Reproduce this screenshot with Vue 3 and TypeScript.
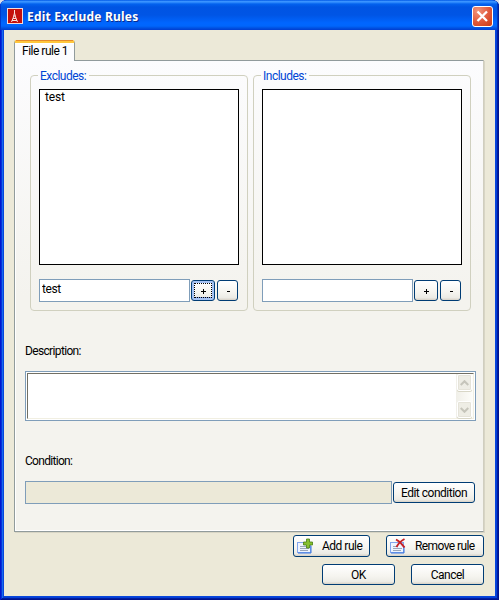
<script setup lang="ts">
import { ref } from 'vue'

interface Group {
  title: string
  items: string[]
  entry: string
  focused: boolean
}

const groups = ref<Group[]>([
  { title: 'Excludes:', items: ['test'], entry: 'test', focused: true },
  { title: 'Includes:', items: [], entry: '', focused: false },
])

function add(g: Group) {
  if (g.entry) g.items.push(g.entry)
}

function removeLast(g: Group) {
  g.items.pop()
}
</script>

<template>
  <div class="window">
    <header class="titlebar">
      <svg class="app-icon" width="16" height="16" viewBox="0 0 16 16">
        <rect width="16" height="16" fill="#f4dcd8" />
        <rect x="1" y="1" width="14" height="14" fill="#c4110c" />
        <path d="M7.500 2v3M7.500 5L6.500 9L4.500 14M7.500 5L8.500 9L10.500 14M6.500 8h2M6 10.500h3M5 12.500h5" stroke="#f8e0dc" fill="none" />
      </svg>
      <h1 class="title"><span>Edit Exclude Rules</span></h1>
      <button class="close" aria-label="Close">
        <svg width="21" height="21" viewBox="0 0 21 21">
          <path d="M5.500 5.500L15 15M15 5.500L5.500 15" stroke="#fff" stroke-width="2.300" />
        </svg>
      </button>
    </header>

    <main class="client">
      <div class="tab"><span>File rule 1</span></div>
      <section class="page">
        <div class="groups">
          <fieldset v-for="g in groups" :key="g.title" class="group">
            <legend>{{ g.title }}</legend>
            <ul class="list">
              <li v-for="(item, i) in g.items" :key="i">{{ item }}</li>
            </ul>
            <div class="entry-row">
              <input v-model="g.entry" class="entry" type="text" />
              <button class="btn plus" :class="{ focused: g.focused }" @click="add(g)">
                <svg width="7" height="7" viewBox="0 0 7 7" shape-rendering="crispEdges"><path d="M1 3.500h5M3.500 1v5" stroke="#000" /></svg>
              </button>
              <button class="btn minus" @click="removeLast(g)">
                <svg width="7" height="7" viewBox="0 0 7 7" shape-rendering="crispEdges"><path d="M2 3.500h3" stroke="#000" /></svg>
              </button>
            </div>
          </fieldset>
        </div>

        <p class="label description-label">Description:</p>
        <div class="memo">
          <div class="memo-inner">
            <div class="memo-text"></div>
            <div class="scroll">
              <span class="arrow"><svg width="9" height="6" viewBox="0 0 9 6"><path d="M.7 5L4.500 1.300L8.300 5" /></svg></span>
              <span class="arrow"><svg width="9" height="6" viewBox="0 0 9 6"><path d="M.7 1L4.500 4.700L8.300 1" /></svg></span>
            </div>
          </div>
        </div>

        <p class="label condition-label">Condition:</p>
        <div class="condition-row">
          <div class="condition"></div>
          <button class="btn edit"><span>Edit condition</span></button>
        </div>
      </section>

      <div class="actions rules">
        <button class="btn add">
          <svg class="rule-icon" width="16" height="16" viewBox="0 0 16 16">
            <rect x=".5" y="4.500" width="13" height="10" fill="#eef4ff" stroke="#82a5ee" />
            <path d="M1 15h13V8" stroke="#3974df" fill="none" />
            <path d="M3 8.500h6M3 10.500h9M3 12.500h8" stroke="#9aa6ba" />
            <path d="M9.500 1h3v3h3v3h-3v3h-3V7h-3V4h3z" fill="#86c030" stroke="#477d14" stroke-width=".8" />
          </svg>
          <span>Add rule</span>
        </button>
        <button class="btn remove">
          <svg class="rule-icon" width="16" height="16" viewBox="0 0 16 16">
            <rect x=".5" y="4.500" width="13" height="10" fill="#eef4ff" stroke="#82a5ee" />
            <path d="M1 15h13V8" stroke="#3974df" fill="none" />
            <path d="M3 8.500h4M3 10.500h9M3 12.500h8" stroke="#9aa6ba" />
            <path d="M6 1.500Q11 4 14.500 9.500M14.500 1Q9 4 6.500 9" stroke="#c52026" stroke-width="1.900" fill="none" />
          </svg>
          <span>Remove rule</span>
        </button>
      </div>
      <div class="actions dialog">
        <button class="btn ok"><span>OK</span></button>
        <button class="btn cancel"><span>Cancel</span></button>
      </div>
    </main>
  </div>
</template>

<style>
body {
  margin: 0;
  background: #d8dfe9;
}
</style>

<style scoped>
.window,
.window * {
  box-sizing: border-box;
}

.window {
  display: flex;
  flex-direction: column;
  width: 499px;
  height: 600px;
  padding: 0 4px 4px;
  overflow: hidden;
  border-radius: 7px 7px 0 0;
  background: #0846dc;
  box-shadow: inset 1px 0 #0019cf, inset -1px 0 #00138c, inset 0 -1px #00138c, inset 2px 0 #0831d9, inset -2px 0 #001ea0, inset 0 -2px #001ea0, inset 3px 0 #166aee, inset -3px 0 #0441d8, inset 0 -3px #0441d8;
  font-family: Roboto, "Liberation Sans", sans-serif;
  font-size: 12px;
  letter-spacing: -.5px;
  line-height: 14px;
  color: #000;
}

.titlebar {
  display: flex;
  flex: none;
  align-items: flex-start;
  height: 30px;
  margin: 0 -4px;
  padding: 0 6px 0 7px;
  background: linear-gradient(#0058e6 0, #3a93ff 1.500px, #2a86fb 2.500px, #0362ee 4px, #0054e3 7px, #0055e5 15px, #0066ff 23px, #0066fc 26px, #0052e2 28px, #003dd0 30px);
  box-shadow: inset 1px 0 #0038c8, inset -1px 0 #00209c, inset -2px 0 #0038c0;
}

.app-icon {
  margin-top: 8px;
}

.title {
  flex: 1;
  margin: 9px 0 0 4px;
  font-family: "Noto Sans", sans-serif;
  font-size: 12px;
  font-weight: 700;
  letter-spacing: .22px;
  line-height: 16px;
  color: #fff;
  text-shadow: 1px 1px #0b2b8c;
  white-space: nowrap;
}

.close {
  width: 21px;
  height: 21px;
  margin-top: 6px;
  padding: 0;
  border: 1px solid #fff;
  border-radius: 3px;
  background: radial-gradient(circle at 25% 20%, #f0937a, #e0583a 55%, #c83a14);
}

.close svg {
  display: block;
  margin: -1px;
}

.client {
  flex: 1;
  padding: 10px 11px 0 10px;
  background: #ece9d8;
}

.tab {
  position: relative;
  width: 61px;
  height: 21px;
  padding: 1px 0 0 7px;
  border: 1px solid #919b9c;
  border-top: 3px solid #ffc73c;
  border-bottom: 0;
  border-radius: 3px 3px 0 0;
  background: #fcfcfe;
  box-shadow: inset 0 1px #fff;
  white-space: nowrap;
}

.tab::before {
  position: absolute;
  top: -3px;
  right: 1px;
  left: 1px;
  height: 1px;
  background: #e68b2c;
  content: "";
}

.page {
  height: 472px;
  margin-top: -1px;
  padding: 8px 7px 0 10px;
  border: 1px solid #919b9c;
  border-right-color: #d0cebf;
  background: linear-gradient(#fcfcfe, #f4f3ee 50%, #f4f3ee);
  box-shadow: inset 1px 0 #fff, inset 0 -1px #fff, 1px 1px #d8d5c5;
}

.groups {
  display: flex;
  gap: 5px;
  padding-left: 5px;
}

.group {
  width: 218px;
  height: 242px;
  min-width: 0;
  margin: 0;
  padding: 0 8px;
  border: 1px solid #d0d0bf;
  border-radius: 4px;
}

.group legend {
  height: 13px;
  margin-left: -1px;
  padding: 0 3px 0 2px;
  line-height: 14px;
  color: #0046d5;
}

.list {
  width: 200px;
  height: 176px;
  margin: 7px 0 0;
  padding: 0 5px;
  border: 1px solid #000;
  background: #fff;
  letter-spacing: -.2px;
  list-style: none;
}

.entry-row {
  display: flex;
  align-items: center;
  margin-top: 14px;
}

.entry {
  width: 151px;
  height: 23px;
  padding: 0 3px 3px 2px;
  border: 1px solid #7f9db9;
  border-radius: 0;
  outline: 0;
  background: #fff;
  color: #000;
  font: inherit;
  letter-spacing: -.4px;
}

.btn {
  display: flex;
  align-items: center;
  justify-content: center;
  height: 21px;
  padding: 0;
  border: 1px solid #003c74;
  border-radius: 3px;
  background: linear-gradient(#fff, #f5f4ef 60%, #ecebe5 88%, #d6d0c5);
  color: #000;
  font: inherit;
  letter-spacing: inherit;
  white-space: nowrap;
}

.btn svg {
  display: block;
  flex: none;
}

.plus {
  width: 24px;
  margin: 0 2px 0 1px;
}

.plus svg {
  margin: 2px 0 0 1px;
}

.minus {
  width: 21px;
}

.minus svg {
  margin: 2px 0 0 2px;
}

.focused {
  position: relative;
  box-shadow: inset 0 0 0 2px #a5c2f3, inset 0 -3px #7f9fe6;
}

.focused::after {
  position: absolute;
  inset: 2px;
  border: 1px dotted #000;
  content: "";
}

.label {
  height: 14px;
  margin: 0;
}

.description-label {
  margin-top: 33px;
  letter-spacing: -.65px;
}

.memo {
  width: 451px;
  height: 50px;
  margin-top: 13px;
  padding: 1px;
  border: 1px solid #7f9db9;
  background: #fff;
}

.memo-inner {
  display: flex;
  height: 46px;
  border-top: 1px solid #716f64;
  border-left: 1px solid #716f64;
  border-right: 1px solid #f1efe2;
  border-bottom: 1px solid #f1efe2;
}

.memo-text {
  flex: 1;
}

.scroll {
  display: flex;
  flex-direction: column;
  justify-content: space-between;
  width: 17px;
  padding: 0 1px;
  background: linear-gradient(90deg, #f0efe8, #fdfdfa);
}

.arrow {
  display: flex;
  align-items: center;
  justify-content: center;
  height: 17px;
  border: 1px solid #fff;
  border-radius: 2px;
  background: #eeede5;
  box-shadow: inset 0 0 0 1px #e5e3d9, 0 1px #d8d6c6;
}

.arrow path {
  fill: none;
  stroke: #c6c5bb;
  stroke-width: 2.200;
}

.condition-label {
  margin-top: 33px;
  letter-spacing: -.7px;
}

.condition-row {
  display: flex;
  align-items: center;
  margin-top: 13px;
}

.condition {
  width: 367px;
  height: 23px;
  border: 1px solid #7f9db9;
  background: #ece9d8;
}

.edit {
  width: 82px;
  margin-left: 1px;
}

.actions {
  display: flex;
  justify-content: flex-end;
  gap: 16px;
}

.rules {
  margin-top: 3px;
}

.rules .btn {
  height: 22px;
  justify-content: flex-start;
  padding-left: 3px;
}

.dialog {
  margin-top: 7px;
}

.add {
  width: 77px;
}

.remove {
  width: 98px;
}

.remove span {
  letter-spacing: -.6px;
}

.rule-icon {
  margin-right: 9px;
}

.remove .rule-icon {
  margin-right: 9px;
}

.ok,
.cancel {
  width: 73px;
}
</style>
